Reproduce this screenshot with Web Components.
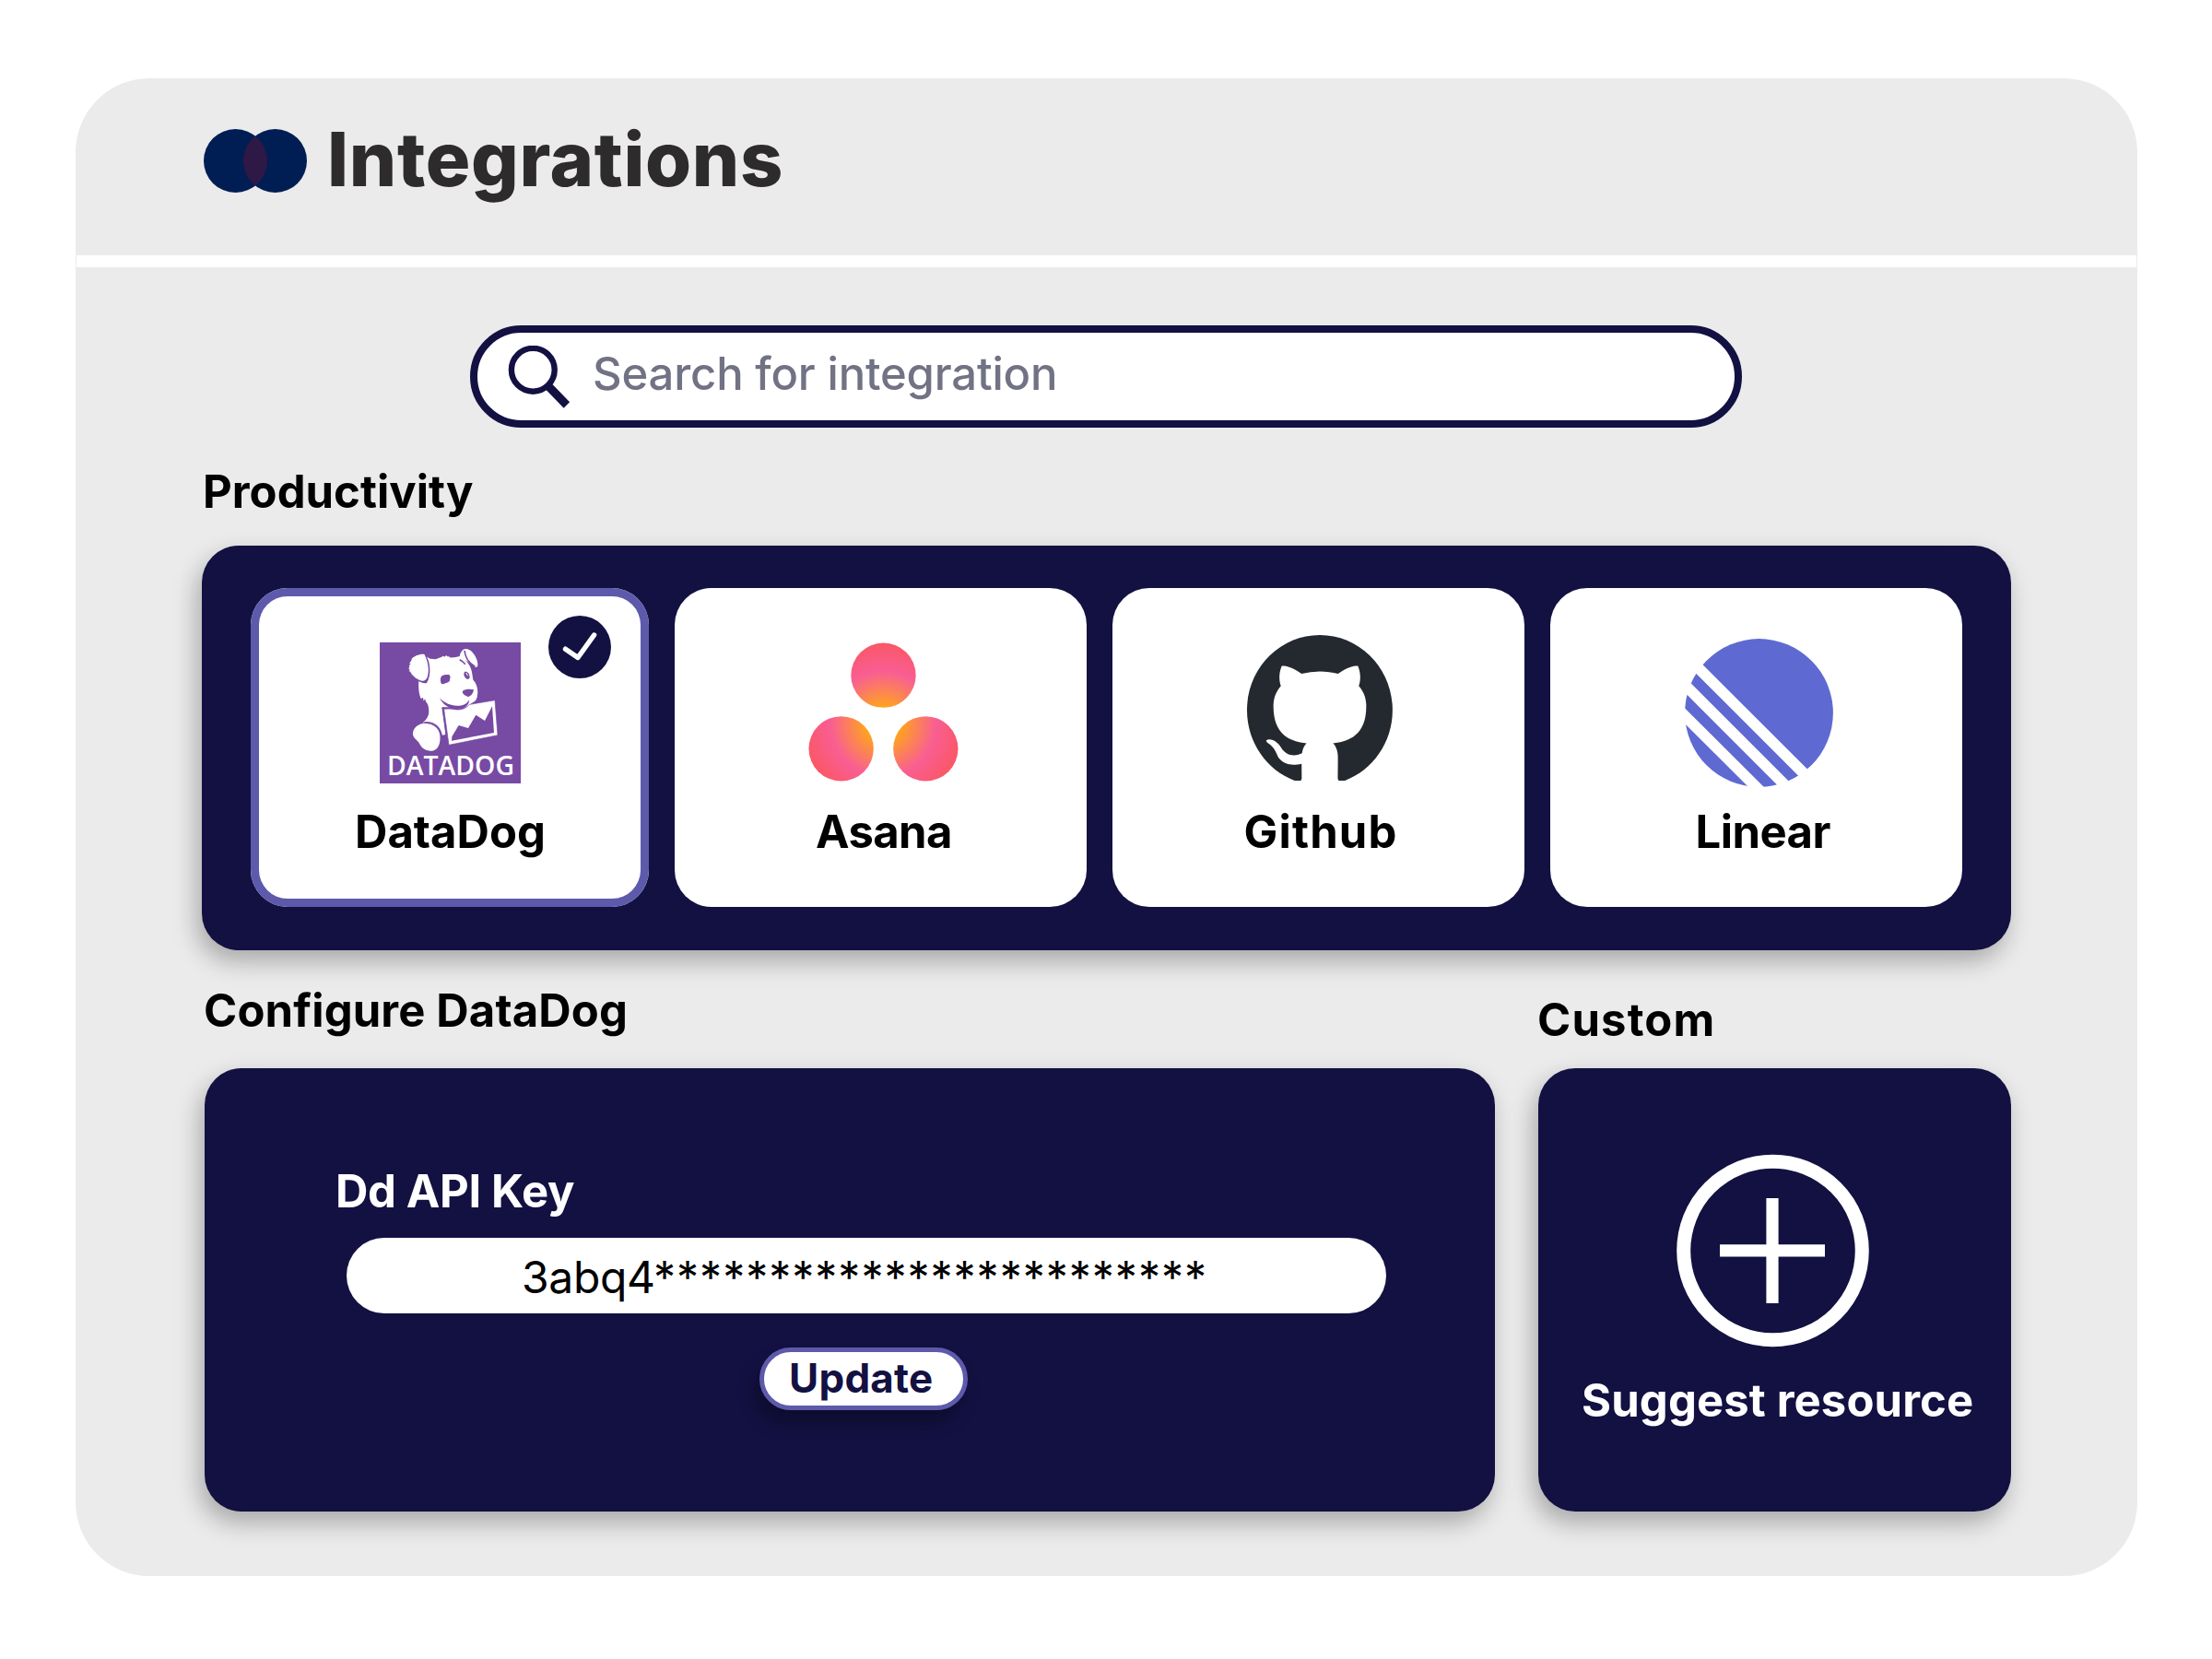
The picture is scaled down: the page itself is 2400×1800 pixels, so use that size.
<!DOCTYPE html>
<html lang="en">
<head>
<meta charset="utf-8">
<title>Integrations</title>
<style>
  body { margin: 0; width: 2400px; height: 1800px; overflow: hidden; background: #fff; font-family: Inter, "Liberation Sans", sans-serif; color: #000; }
</style>
</head>
<body>
<integrations-page></integrations-page>
<script>
const define = (name, html, setup) => {
  const tpl = document.createElement('template');
  tpl.innerHTML = html;
  customElements.define(name, class extends HTMLElement {
    connectedCallback() {
      if (this.shadowRoot) return;
      this.attachShadow({ mode: 'open' }).append(tpl.content.cloneNode(true));
      if (setup) setup(this);
    }
  });
};

define('integrations-page', `
<style>
  :host { display: flex; box-sizing: border-box; width: 2400px; height: 1800px; padding: 85px 81px 90px 82px; }
  main { flex: 1; display: flex; flex-direction: column; background: #ebebeb; border-radius: 80px; }
  .rule { height: 13px; margin: 0 1px; background: #fff; }
  .body { flex: 1; display: flex; flex-direction: column; padding: 63px 137px 70px 137px; }
  search-field { margin-left: 291px; }
  .heading { margin: 40px 0 28px 4px; }
  .bottom { flex: 1; display: flex; justify-content: space-between; margin-left: 3px; }
  .col { display: flex; flex-direction: column; justify-content: space-between; }
  .col.a { width: 1400px; padding-top: 36px; }
  .col.b { width: 513px; padding-top: 46px; }
  .col fit-text { margin-left: 1px; }
  .form { flex: 1; display: flex; flex-direction: column; }
  .form > fit-text { margin: 104px 0 0 145px; color: #fff; }
  key-field { margin: 20px 0 0 154px; }
  update-button { margin: 37px 0 0 602px; }
  .suggest { flex: 1; display: flex; flex-direction: column; padding: 93px 0 0; }
  .suggest svg { margin-left: 149px; }
  .suggest fit-text { color: #fff; margin: 27px 0 0 49px; }
</style>
<main>
  <page-header></page-header>
  <div class="rule"></div>
  <div class="body">
    <search-field></search-field>
    <fit-text class="heading" width="290">Productivity</fit-text>
    <dark-panel style="height:439px">
      <integration-list></integration-list>
    </dark-panel>
    <div class="bottom">
      <div class="col a">
        <fit-text width="455">Configure DataDog</fit-text>
        <dark-panel style="height:481px">
          <div class="form">
            <fit-text width="256">Dd API Key</fit-text>
            <key-field></key-field>
            <update-button></update-button>
          </div>
        </dark-panel>
      </div>
      <div class="col b">
        <fit-text width="187.500">Custom</fit-text>
        <dark-panel style="height:481px">
          <div class="suggest">
            <svg width="211" height="211" viewBox="0 0 211 211" fill="none" stroke="#fff">
              <circle cx="105.500" cy="105" r="96.8" stroke-width="15"/>
              <path d="M48 104.800H162M105 48V162" stroke-width="13.200"/>
            </svg>
            <fit-text width="422">Suggest resource</fit-text>
          </div>
        </dark-panel>
      </div>
    </div>
  </div>
</main>`);

define('page-header', `
<style>
  :host { display: flex; box-sizing: border-box; height: 192px; padding: 55px 0 0 139px; gap: 26px; align-items: flex-start; }
</style>
<svg width="112" height="69" viewBox="0 0 112 69">
  <circle cx="34.5" cy="34.5" r="34.500" fill="#001e53"/>
  <circle cx="77.5" cy="34.5" r="34.500" fill="#001e53"/>
  <path d="M56 7.500A34.500 34.500 0 0 1 56 61.500A34.500 34.500 0 0 1 56 7.500Z" fill="#2d1846"/>
</svg>
<fit-text width="488" style="font-size:81px;font-weight:800;line-height:66px;color:#2d2b2c">Integrations</fit-text>`);

define('search-field', `
<style>
  :host { display: flex; box-sizing: border-box; width: 1380px; height: 111px; padding: 14px 0 0 33px; gap: 26px; border: 8px solid #131142; border-radius: 56px; background: #fff; }
</style>
<svg width="68" height="68" viewBox="551.500 375 68 68" fill="none" stroke="#131142">
  <circle cx="578.8" cy="401.3" r="23.4" stroke-width="6.400"/>
  <path d="M595.500 419L615.400 439.500" stroke-width="9"/>
</svg>
<fit-text width="499" style="font-weight:450;color:#727285;padding-top:1px">Search for integration</fit-text>`);

define('dark-panel', `
<style>
  :host { display: flex; box-sizing: border-box; border-radius: 40px; background: #131142; box-shadow: -5px 12px 27px rgba(0,0,0,.285); }
</style>
<slot></slot>`);

define('integration-list', `
<style>
  :host { flex: 1; display: flex; gap: 28px; padding: 46px 53px 47px; }
  integration-card { flex: 0 0 447px; }
  integration-card[selected] { flex: 0 0 432px; }
</style>
<integration-card selected style="padding-left:1px">
  <svg slot="logo" width="153" height="153" style="margin-top:59px" viewBox="36 51 459 459">
    <path fill="#774aa4" d="M36 51h459v459H36z"/>
    <path fill="#fff" d="M186 96L200 104L218 106L236 99L243 95L246 98L253 93L256 97L263 97L262 100C274 101 288 99 296 96C299 82 306 72 317 72C338 74 353 102 355 120C356 132 351 134 343 129C334 122 324 113 314 109C326 120 333 131 336 148L340 173C351 184 357 202 354 222C353 235 348 244 336 248L322 260C300 268 280 266 268 262L239 262L250 350C243 354 239 353 236 351L233 341C224 322 205 311 176 313C189 302 196 290 196 277C196 260 192 249 187 245L183 235L179 242L177 231L170 234C165 222 161 204 163 178Z"/>
    <path fill="#774aa4" d="M182 87C202 110 205 158 189 183C180 186 168 181 158 174L160 150Z"/>
    <path fill="#fff" d="M181 89C193 111 199 142 191 164C187 173 181 177 174 176C157 172 143 160 137 149L135 145L131 146L134 139L130 138L133 130L131 128L137 119L132 121L141 106L138 106C148 95 163 88 181 89Z"/>
    <path fill="none" stroke="#774aa4" stroke-width="5" d="M312 78C315 99 326 119 346 130M296 107C304 111 310 116 314 122"/>
    <path fill="#774aa4" d="M237 161C242 157 249 156 262 156L266 163L263 178C254 183 246 186 239 187C233 183 232 168 237 161ZM312 147C320 144 329 152 329 165C327 172 320 172 316 167C310 161 308 154 312 147ZM306 209C316 202 329 202 342 205C341 216 333 227 323 228C315 224 303 220 306 209Z"/>
    <path fill="none" stroke="#fff" stroke-width="3" d="M317 150L323 160"/>
    <path fill="#774aa4" d="M231 232C249 251 274 259 296 257C312 256 321 249 328 236L326 246C322 260 309 268 287 269C257 266 239 249 231 232Z"/>
    <path fill="none" stroke="#774aa4" stroke-width="5" d="M181 312C213 309 236 328 237 358C237 376 232 391 225 399"/>
    <path fill="#fff" d="M172 316C204 310 228 326 232 352C235 378 228 401 207 404C187 406 173 396 166 382C161 369 146 365 144 351C143 333 156 321 172 316Z"/>
    <path fill="#774aa4" d="M238 263L245 262L262 386L257 386Z"/>
    <path fill="#fff" stroke="#774aa4" stroke-width="2" d="M245 268C260 267 271 267 280 269C304 273 317 264 329 253L411 239L420 353L261 385Z"/>
    <path fill="#774aa4" d="M271 358L293 321L324 330L349 287L378 306L402 259L408 345L270 371Z"/>
    <text x="60" y="483" fill="#fff" font-family="Open Sans" font-weight="600" font-size="84" textLength="414" lengthAdjust="spacingAndGlyphs">DATADOG</text>
  </svg>
  <fit-text slot="name" width="201" style="margin-top:23px">DataDog</fit-text>
</integration-card>
<integration-card style="padding-left:5px">
  <svg slot="logo" width="163" height="151" style="margin-top:59px" viewBox="110 111 489 453">
    <defs>
      <radialGradient id="g" gradientUnits="userSpaceOnUse" cx="354" cy="376" r="276">
        <stop offset="0.190" stop-color="#ffa51f"/><stop offset=".22" stop-color="#fea025"/><stop offset=".62" stop-color="#f95e93"/><stop offset="1" stop-color="#fb5660"/>
      </radialGradient>
    </defs>
    <g fill="url(#g)"><circle cx="354.5" cy="218" r="105.500"/><circle cx="217" cy="457" r="105.500"/><circle cx="492" cy="457" r="105.500"/></g>
  </svg>
  <fit-text slot="name" width="145" style="margin:25px 0 0 1px">Asana</fit-text>
</integration-card>
<integration-card style="padding-left:2px">
  <svg slot="logo" width="158" height="158" style="margin-top:51px" viewBox="0 0 97.700 95.400" preserveAspectRatio="none">
    <path fill="#24292f" fill-rule="evenodd" d="M48.854 0C21.839 0 0 22 0 49.217c0 21.756 13.993 40.172 33.405 46.690 2.427.490 3.316-1.059 3.316-2.362 0-1.141-.080-5.052-.080-9.127-13.590 2.934-16.420-5.867-16.420-5.867-2.184-5.704-5.420-7.170-5.420-7.170-4.448-3.015.324-3.015.324-3.015 4.934.326 7.523 5.052 7.523 5.052 4.367 7.496 11.404 5.378 14.235 4.074.404-3.178 1.699-5.378 3.074-6.600-10.839-1.141-22.243-5.378-22.243-24.283 0-5.378 1.940-9.778 5.014-13.200-.485-1.222-2.184-6.275.486-13.038 0 0 4.125-1.304 13.426 5.052a46.970 46.970 0 0 1 12.214-1.630c4.125 0 8.330.571 12.213 1.630 9.302-6.356 13.427-5.052 13.427-5.052 2.670 6.763.970 11.816.485 13.038 3.155 3.422 5.015 7.822 5.015 13.200 0 18.905-11.404 23.060-22.324 24.283 1.780 1.548 3.316 4.481 3.316 9.126 0 6.600-.080 11.897-.080 13.526 0 1.304.890 2.853 3.316 2.364 19.412-6.520 33.405-24.935 33.405-46.691C97.707 22 75.788 0 48.854 0z"/>
  </svg>
  <fit-text slot="name" width="162" style="margin:26px 0 0 2px">Github</fit-text>
</integration-card>
<integration-card style="padding-left:6px">
  <svg slot="logo" width="161" height="161" style="margin-top:55px" viewBox="84 98 483 484">
    <clipPath id="disc"><circle cx="325.500" cy="340" r="241.700"/></clipPath>
    <path clip-path="url(#disc)" fill="#5e6ad2" d="M43 84L143 184L484 524L600 640V0H43ZM71 162L121 212L454 545L504 595H455L104 244L54 194ZM41 231L91 281L385 575L435 625H385L84 325L34 275ZM47 338L87 378L289 580L329 620H0Z"/>
  </svg>
  <fit-text slot="name" width="144" style="margin:19px 0 0 12px">Linear</fit-text>
</integration-card>`);

define('integration-card', `
<style>
  :host { display: flex; position: relative; flex-direction: column; align-items: center; box-sizing: border-box; border-radius: 40px; background: #fff; }
  :host([selected]) { box-shadow: inset 0 0 0 9px #5d5aac; }
  .check { display: none; position: absolute; top: 30px; right: 41px; }
  :host([selected]) .check { display: block; }
</style>
<svg class="check" width="68" height="68" viewBox="595 668 68 68">
  <circle cx="629" cy="702" r="34" fill="#131142"/>
  <path d="M613.500 704.200L627 713.500L644.600 689" fill="none" stroke="#fff" stroke-width="5.400" stroke-linecap="round" stroke-linejoin="round"/>
</svg>
<slot name="logo"></slot>
<slot name="name"></slot>`);

define('key-field', `
<style>
  :host { display: flex; box-sizing: border-box; width: 1128px; height: 82px; padding: 13px 0 0 192px; border-radius: 41px; background: #fff; }
  fit-text { font-size: 48px; font-weight: 400; line-height: 60px; }
</style>
<fit-text width="141">3abq4</fit-text><fit-text width="596" style="margin-left:2px">************************</fit-text>`);

define('update-button', `
<style>
  :host { display: flex; box-sizing: border-box; width: 226px; height: 68px; padding: 0 0 2px 29px; border: 5px solid #5d5aac; border-radius: 34px; background: #fff; align-items: center; box-shadow: -6px 14px 18px rgba(0,0,0,.3); }
</style>
<fit-text width="153" style="font-size:44px;line-height:56px;color:#131142">Update</fit-text>`);

/* Text whose tracking is adjusted so that its drawn glyphs span exactly the given width. */
define('fit-text', `
<style>
  :host { display: block; flex: none; font-size: 49px; font-weight: 700; line-height: 60px; white-space: nowrap; }
  span { display: inline-block; }
</style>
<span><slot></slot></span>`, el => {
  const width = +el.getAttribute('width');
  el.style.width = width + 'px';
  const span = el.shadowRoot.querySelector('span');
  const text = el.textContent;
  const cs = getComputedStyle(el);
  const ctx = document.createElement('canvas').getContext('2d');
  ctx.font = cs.fontWeight + ' ' + cs.fontSize + ' ' + cs.fontFamily;
  const m = ctx.measureText(text);
  const right = m.width - m.actualBoundingBoxRight;
  const ink = span.getBoundingClientRect().width + m.actualBoundingBoxLeft - right;
  span.style.letterSpacing = (width - ink) / (text.length - 1) + 'px';
  span.style.marginLeft = m.actualBoundingBoxLeft + 'px';
});
</script>
</body>
</html>
